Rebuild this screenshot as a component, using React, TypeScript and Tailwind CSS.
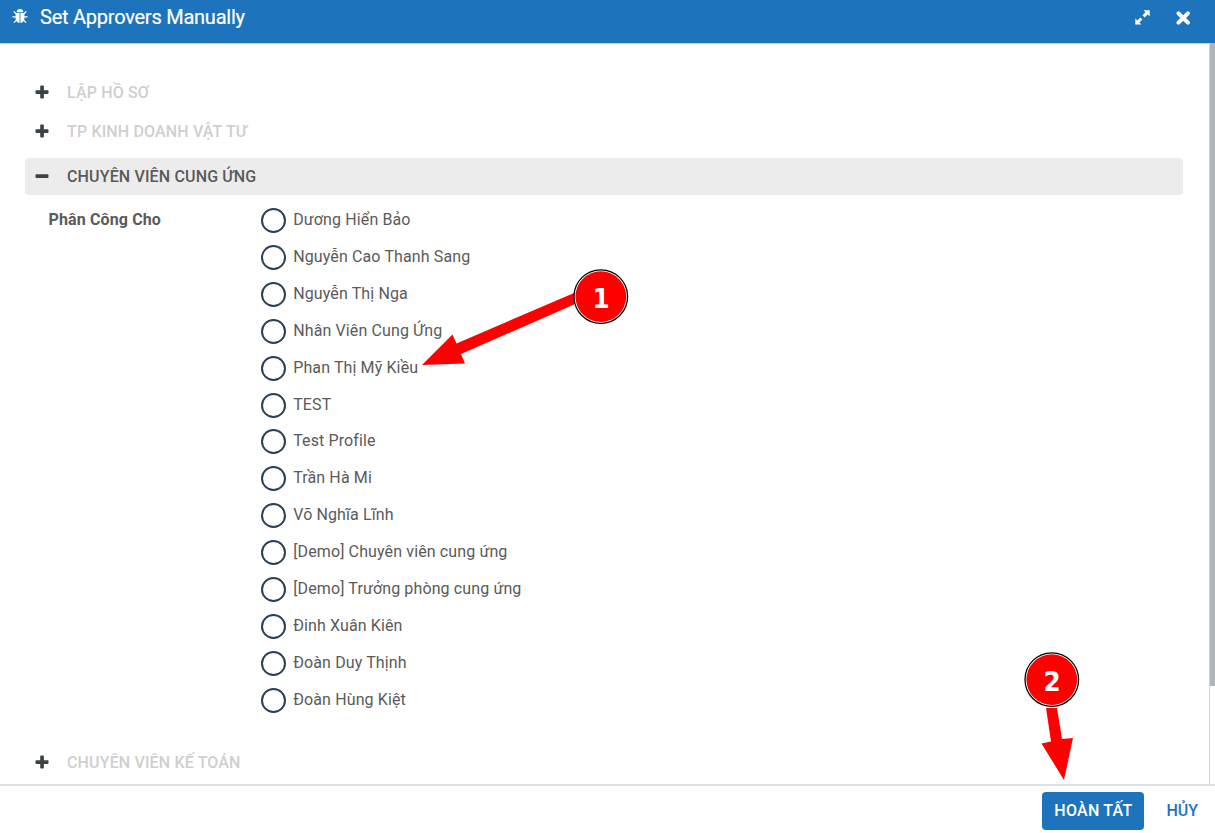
import React from "react";

const approvers = [
  "Dương Hiển Bảo",
  "Nguyễn Cao Thanh Sang",
  "Nguyễn Thị Nga",
  "Nhân Viên Cung Ứng",
  "Phan Thị Mỹ Kiều",
  "TEST",
  "Test Profile",
  "Trần Hà Mi",
  "Võ Nghĩa Lĩnh",
  "[Demo] Chuyên viên cung ứng",
  "[Demo] Trưởng phòng cung ứng",
  "Đinh Xuân Kiên",
  "Đoàn Duy Thịnh",
  "Đoàn Hùng Kiệt",
];

function BugIcon() {
  return (
    <svg width="16" height="15" viewBox="0 0 16 15" fill="none" stroke="#fff" strokeWidth="1.3">
      <path d="M4.7 3.2A3.3 3.1 0 0 1 11.3 3.2Z" fill="#fff" stroke="none" />
      <path d="M3.6 4H7.6V13.9C5 13.8 3.6 12 3.6 9.8ZM8.4 4H12.4V9.8C12.4 12 11 13.8 8.4 13.9Z" fill="#fff" stroke="none" />
      <path d="M1.7 2.4L4.4 5M14.3 2.4L11.6 5M.4 7.9H4M15.6 7.9H12M1.9 13.6L4.6 10.9M14.1 13.6L11.4 10.9" />
    </svg>
  );
}

function ExpandIcon() {
  return (
    <svg width="15" height="15" viewBox="0 0 15 15" fill="#fff">
      <path d="M8.6.3H14.7V6.2L12.6 4.4L9.6 7.4L7.5 5.3L10.5 2.3ZM.3 8.6L2.3 10.5L5.3 7.5L7.4 9.6L4.4 12.6L6.3 14.5H.3Z" />
    </svg>
  );
}

function CloseIcon() {
  return (
    <svg width="14" height="14" viewBox="0 0 14 14" stroke="#fff" strokeWidth="4" strokeLinecap="round">
      <path d="M2.5 2.3L11.9 11.7M11.9 2.3L2.5 11.7" />
    </svg>
  );
}

function ToggleIcon({ open }: { open?: boolean }) {
  return (
    <svg width="14" height="14" viewBox="0 0 14 14" fill="#3a4149" className="-mt-[2px] block">
      <rect x=".5" y="5.2" width="13" height="3.7" rx=".9" />
      {!open && <rect x="5.2" y=".5" width="3.7" height="13" rx=".9" />}
    </svg>
  );
}

function Section({ title, open }: { title: string; open?: boolean }) {
  return (
    <div
      className={
        open
          ? "flex h-[37px] items-center rounded bg-[#ececec] pl-[10px] text-[#5a5a5a]"
          : "flex h-[37px] items-center pl-[10px] text-[#cfcfcf]"
      }
    >
      <ToggleIcon open={open} />
      <span className="ml-[18px] text-base font-medium tracking-[0.15px]">{title}</span>
    </div>
  );
}

function Marker({ n }: { n: number }) {
  return (
    <div className="relative flex size-[56px] items-center justify-center">
      <svg className="absolute inset-0" width="56" height="56" viewBox="0 0 56 56">
        <circle cx="27.8" cy="27.6" r="26.8" fill="#fff" stroke="#000" strokeWidth="1.3" />
        <circle cx="27.8" cy="27.6" r="25.4" fill="#fe0000" />
      </svg>
      <span className="relative scale-x-95 pt-[3px] font-['DejaVu_Sans',sans-serif] text-[26px] leading-none font-bold text-white">
        {n}
      </span>
    </div>
  );
}

export default function App() {
  return (
    <div className="relative flex h-[833px] w-[1215px] flex-col overflow-hidden bg-white font-['Roboto',sans-serif] text-[#5a5a5a]">
      <header className="flex h-[43px] shrink-0 items-start bg-[#1d73bc] pl-3 text-white">
        <div className="pt-[9px]"><BugIcon /></div>
        <h1 className="ml-[12px] pt-[3px] text-[20px] leading-7 tracking-[-0.24px] [-webkit-text-stroke:0.2px_white]">Set Approvers Manually</h1>
        <button className="mt-[10px] ml-auto" aria-label="Expand"><ExpandIcon /></button>
        <button className="mt-[11px] mr-[25px] ml-[26px]" aria-label="Close"><CloseIcon /></button>
      </header>

      <div className="flex h-[741px] shrink-0">
        <main className="h-full flex-1 border-t border-[#c4d3df] pl-[25px] pt-[30px]">
          <div className="w-[1158px]">
            <Section title="LẬP HỒ SƠ" />
            <div className="mt-[2px]"><Section title="TP KINH DOANH VẬT TƯ" /></div>
            <div className="mt-[8px]"><Section title="CHUYÊN VIÊN CUNG ỨNG" open /></div>
            <div className="flex h-[549px] pt-[7px]">
              <div className="w-[236px] pt-[6px] pl-[23.5px] text-base leading-6 font-bold tracking-[0.13px]">Phân Công Cho</div>
              <div>
                {approvers.map((name) => (
                  <label key={name} className="flex h-[36.923px] items-center gap-[7.2px] text-base tracking-[0.12px]">
                    <span className="size-[25px] rounded-full border-2 border-[#2b3f56]" />
                    <span className="-mt-[1px]">{name}</span>
                  </label>
                ))}
              </div>
            </div>
            <Section title="CHUYÊN VIÊN KẾ TOÁN" />
          </div>
        </main>
        <div className="w-[6px] border-l border-[#d4d4d4]">
          <div className="h-[643px] bg-[#adb5bd]" />
        </div>
      </div>

      <footer className="flex flex-1 items-start justify-end border-t-2 border-[#dce1e6] pt-[6px] text-base font-medium">
        <button className="h-[38px] w-[102px] rounded bg-[#1d73bc] tracking-[0.25px] text-white">HOÀN TẤT</button>
        <button className="mr-[17px] ml-[22px] h-[38px] text-[#1d73bc]">HỦY</button>
      </footer>

      <svg className="pointer-events-none absolute inset-0" width="1215" height="833" fill="#fe0000">
        <path d="M422 365L452.5 334.5L456.5 343.5L574 293V304.5L461 354L465 363.5Z" />
        <path d="M1046 708H1057L1062 739L1073 738L1064 780L1041.5 743.5L1051 741.5Z" />
      </svg>
      <div className="absolute top-[269px] left-[573px]"><Marker n={1} /></div>
      <div className="absolute top-[652px] left-[1024px]"><Marker n={2} /></div>
    </div>
  );
}
